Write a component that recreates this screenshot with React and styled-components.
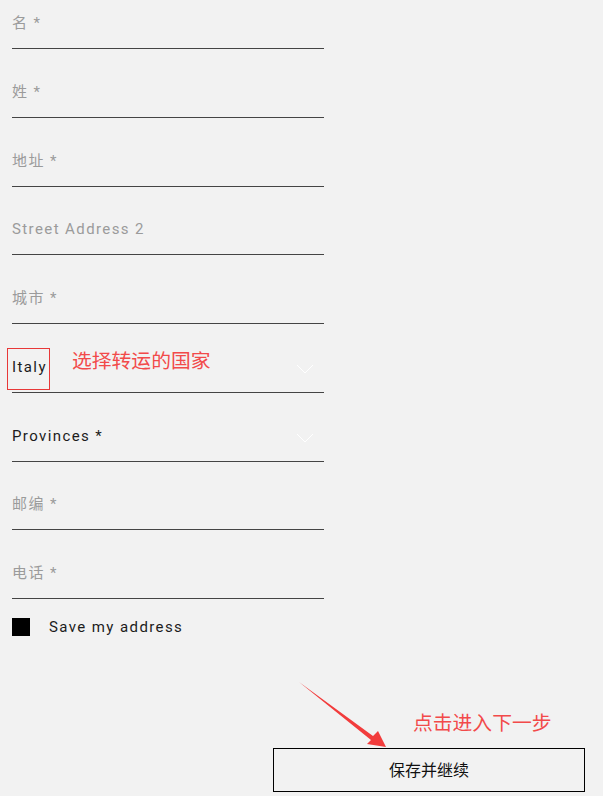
import React from "react";
import styled, { createGlobalStyle } from "styled-components";

const Global = createGlobalStyle`
  html, body { margin: 0; padding: 0; background: #f2f2f2; }
  body { font-family: Roboto, "Noto Sans CJK SC", sans-serif; }
`;

const Page = styled.div`
  position: relative;
  width: 603px;
  height: 796px;
  overflow: hidden;
  background: #f2f2f2;
`;

const Form = styled.div`
  display: flex;
  flex-direction: column;
  width: 312px;
  margin-left: 12px;
`;

const Field = styled.div`
  position: relative;
  display: flex;
  align-items: flex-end;
  justify-content: space-between;
  box-sizing: border-box;
  height: ${(p) => (p.$first ? "49px" : "68.75px")};
  padding-bottom: 15px;
  border-bottom: 1px solid #444;
`;

const Label = styled.span`
  font-family: Roboto, "Noto Sans CJK SC", sans-serif;
  font-size: 15px;
  line-height: 20px;
  letter-spacing: 1.4px;
  color: ${(p) => (p.$filled ? "#1c1c1c" : "#9b9b9b")};
`;

const Chevron = styled.svg`
  width: 18px;
  height: 10px;
  margin-right: 10px;
  margin-bottom: 3px;
`;

const CheckRow = styled.label`
  display: flex;
  align-items: center;
  gap: 19px;
  margin-top: 18px;
  margin-left: 12px;
  font-family: Roboto, sans-serif;
  font-size: 15px;
  line-height: 20px;
  letter-spacing: 1.4px;
  color: #1c1c1c;
`;

const Box = styled.span`
  width: 18px;
  height: 18px;
  background: #000;
`;

const Footer = styled.div`
  display: flex;
  justify-content: flex-end;
  padding-right: 18px;
  margin-top: 111px;
`;

const Button = styled.button`
  box-sizing: border-box;
  width: 312px;
  height: 44px;
  border: 1px solid #000;
  background: transparent;
  font-family: "Noto Sans CJK SC", sans-serif;
  font-size: 16px;
  line-height: 20px;
  color: #111;
  padding: 0 0 3px 0;
`;

const Note = styled.div`
  position: absolute;
  left: ${(p) => p.$x}px;
  top: ${(p) => p.$y}px;
  font-family: "Noto Sans CJK SC", sans-serif;
  font-size: 19.8px;
  line-height: 24px;
  color: #f24a4a;
  white-space: nowrap;
`;

const Frame = styled.div`
  position: absolute;
  left: 7px;
  top: 348px;
  width: 41px;
  height: 40px;
  border: 1px solid #e83838;
`;

const Overlay = styled.svg`
  position: absolute;
  left: 0;
  top: 0;
  width: 603px;
  height: 796px;
  pointer-events: none;
`;

const Caret = () => (
  <Chevron viewBox="0 0 18 10">
    <path d="M1 1 L9 9 L17 1" fill="none" stroke="#ffffff" strokeWidth="1" />
  </Chevron>
);

const fields = [
  { label: "名 *" },
  { label: "姓 *" },
  { label: "地址 *" },
  { label: "Street Address 2" },
  { label: "城市 *" },
  { label: "Italy", filled: true, select: true },
  { label: "Provinces *", filled: true, select: true },
  { label: "邮编 *" },
  { label: "电话 *" },
];

export default function App() {
  return (
    <Page>
      <Global />
      <Form>
        {fields.map((f, i) => (
          <Field key={i} $first={i === 0}>
            <Label $filled={f.filled}>{f.label}</Label>
            {f.select && <Caret />}
          </Field>
        ))}
      </Form>
      <CheckRow>
        <Box />
        Save my address
      </CheckRow>
      <Footer>
        <Button>保存并继续</Button>
      </Footer>

      <Frame />
      <Note $x={72} $y={348}>选择转运的国家</Note>
      <Note $x={413} $y={710}>点击进入下一步</Note>
      <Overlay viewBox="0 0 603 796">
        <polygon
          points="299,682 373,736 378,731 386,747 367,744 371,740"
          fill="#f23c3c"
        />
      </Overlay>
    </Page>
  );
}
